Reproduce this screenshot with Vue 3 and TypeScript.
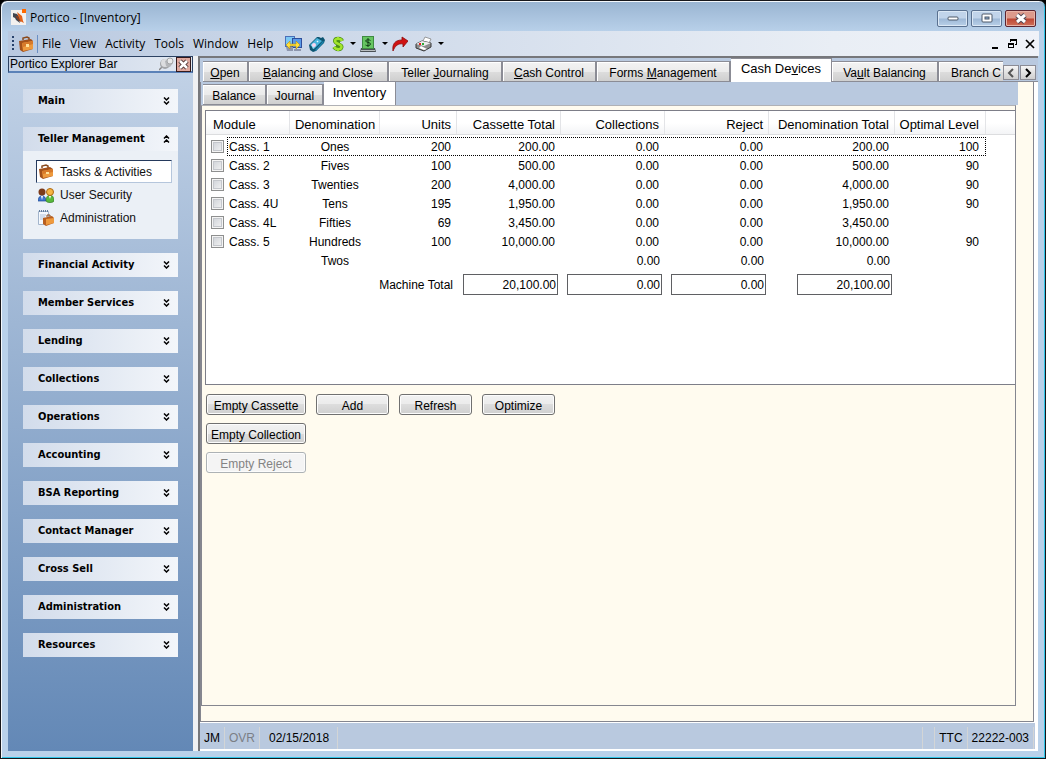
<script setup lang="ts">
import { ref } from 'vue'

interface Tab { pre: string; key: string; post: string }
interface Row { module: string; denom: string; units: string; cassette: string; total: string; optimal: string }

const menus: string[] = ['File', 'View', 'Activity', 'Tools', 'Window', 'Help']
const tabs: Tab[] = [
  { pre: '', key: 'O', post: 'pen' },
  { pre: '', key: 'B', post: 'alancing and Close' },
  { pre: 'Teller ', key: 'J', post: 'ournaling' },
  { pre: '', key: 'C', post: 'ash Control' },
  { pre: 'Forms ', key: 'M', post: 'anagement' },
  { pre: 'Cash De', key: 'v', post: 'ices' },
  { pre: 'Va', key: 'u', post: 'lt Balancing' },
  { pre: 'Branch C', key: '', post: '' }
]
const subTabs: string[] = ['Balance', 'Journal', 'Inventory']
const activeTab = ref(5)
const activeSub = ref(2)
const groups: string[] = [
  'Main', 'Teller Management', 'Financial Activity', 'Member Services', 'Lending', 'Collections',
  'Operations', 'Accounting', 'BSA Reporting', 'Contact Manager', 'Cross Sell', 'Administration', 'Resources'
]
const openGroup = ref('Teller Management')
const headers: string[] = ['Module', 'Denomination', 'Units', 'Cassette Total', 'Collections', 'Reject', 'Denomination Total', 'Optimal Level']
const rows: Row[] = [
  { module: 'Cass. 1', denom: 'Ones', units: '200', cassette: '200.00', total: '200.00', optimal: '100' },
  { module: 'Cass. 2', denom: 'Fives', units: '100', cassette: '500.00', total: '500.00', optimal: '90' },
  { module: 'Cass. 3', denom: 'Twenties', units: '200', cassette: '4,000.00', total: '4,000.00', optimal: '90' },
  { module: 'Cass. 4U', denom: 'Tens', units: '195', cassette: '1,950.00', total: '1,950.00', optimal: '90' },
  { module: 'Cass. 4L', denom: 'Fifties', units: '69', cassette: '3,450.00', total: '3,450.00', optimal: '' },
  { module: 'Cass. 5', denom: 'Hundreds', units: '100', cassette: '10,000.00', total: '10,000.00', optimal: '90' }
]
</script>

<template>
  <div class="window">
    <header class="titlebar">
      <svg class="logo" width="16" height="16" viewBox="0 0 16 16">
        <rect y="1" width="15" height="15" fill="#f3f1ef" />
        <path d="M2 4l4 1 4 5-2 1 1 3-4-3-1-2-2-1z" fill="#3f4650" />
        <path d="M6 3l5 4 1 5 1 2-4-2-1-3z" fill="#e2621b" />
        <path d="M6 6l4 7-2-1-3-4z" fill="#8b3c1b" />
        <rect x="11" width="4" height="4" fill="#ff6a00" />
      </svg>
      <h1>Portico - [Inventory]</h1>
      <div class="winbtns">
        <button aria-label="Minimize"><svg width="12" height="5"><rect x="1" y="1" width="10" height="3" rx="1" fill="#fff" stroke="#4d5868" /></svg></button>
        <button aria-label="Maximize"><svg width="12" height="10"><rect x="1" y="1" width="10" height="8" rx="1" fill="#fff" stroke="#4d5868" /><rect x="4" y="4" width="4" height="2" fill="#8fb0d5" stroke="#4d5868" /></svg></button>
        <button class="close" aria-label="Close"><svg width="14" height="11"><path d="M3 2l8 7M11 2l-8 7" stroke="#4d4652" stroke-width="5" /><path d="M3 2l8 7M11 2l-8 7" stroke="#fff" stroke-width="3" /></svg></button>
      </div>
    </header>

    <nav class="menubar" aria-label="Main menu">
      <span class="grip"></span>
      <svg class="case" width="16" height="16" viewBox="0 0 16 16">
        <path d="M5 4V2l4-1 2 1v2" fill="none" stroke="#8a4a1c" stroke-width="1.5" />
        <path d="M1 5l12-2 2 2v8l-10 3-3-2z" fill="#a4511a" />
        <path d="M4 7l11-2v8L5 15z" fill="#ee9a3e" />
        <path d="M4 7l11-2v3L5 11z" fill="#d7792a" />
        <path d="M8 8h3v3H8z" fill="#ffe19a" />
      </svg>
      <span class="sep"></span>
      <button v-for="m in menus" :key="m" class="menu">{{ m }}</button>
      <div class="tools">
        <button aria-label="Connect">
          <svg width="17" height="16" viewBox="0 0 17 16"><rect x=".5" y=".5" width="9" height="10" fill="#7cc8f4" stroke="#4a6fb8" /><rect x="7.500" y="2.500" width="9" height="9" fill="#5a9ae8" stroke="#2f4f9c" /><path d="M1 11h7v4H2zM9 13h7v2H9z" fill="#8d96ad" /><path d="M1 9l4-4v3h6V5l4 4-4 4v-3H5v3z" fill="#ffe03a" stroke="#b28a14" stroke-width=".6" /></svg>
        </button>
        <button aria-label="Device">
          <svg width="16" height="16" viewBox="0 0 16 16"><path d="M0 9L8 1l2 0 2 1 2-1 2 3-1 3-8 8-3 1-3-2z" fill="#0d5572" /><path d="M1 9l7-7 5 3-7 7z" fill="#49b5dc" /><path d="M6 14l8-9 1 1-8 9z" fill="#1c85ae" /><path d="M2 9l2 4 2-1-3-4z" fill="#8ce0f5" /><circle cx="5" cy="9" r="2" fill="#fbd5ee" /><path d="M8 5l1 1" stroke="#e5fbff" stroke-width="1.5" /></svg>
        </button>
        <button class="drop" aria-label="Cash">
          <svg width="12" height="16" viewBox="0 0 12 16"><path d="M10 5C9 2 3 2 3 5S10 8 9.500 11 4 14 2 11M6 1v14" fill="none" stroke="#4b8f16" stroke-width="4" /><path d="M10 5C9 2 3 2 3 5S10 8 9.500 11 4 14 2 11" fill="none" stroke="#a2e52c" stroke-width="2.500" /><path d="M6 1v3M6 12v3" stroke="#a2e52c" stroke-width="2" /></svg>
          <i></i>
        </button>
        <button class="drop" aria-label="Dispense">
          <svg width="16" height="16" viewBox="0 0 16 16"><path d="M1 12h14l1 4H0z" fill="#4b5156" /><path d="M1 14h14v1H1z" fill="#b9bfc2" /><rect x="2.500" y=".5" width="11" height="12" fill="#66c561" stroke="#3f8a42" /><path d="M10.500 4.500c-1-1-5-1-5 .5s5 1 5 3-4 2-5 1M8 2v9" fill="none" stroke="#123c16" /></svg>
          <i></i>
        </button>
        <button aria-label="Forward">
          <svg width="16" height="16" viewBox="0 0 16 16"><path d="M1 15C0 8 3 4 10 4V1l6 4-5 6V8C6 7 3 10 1 15z" fill="#d01212" stroke="#8e0909" stroke-width=".8" /></svg>
        </button>
        <button class="drop" aria-label="Print">
          <svg width="17" height="16" viewBox="0 0 17 16"><path d="M7 7l3-6 6 2-3 6z" fill="#fff" stroke="#777" stroke-width=".7" /><path d="M1 8l6-3 9 2v4l-7 4-8-3z" fill="#8c8c8c" stroke="#383838" /><path d="M1 8l6-3 9 2-7 3z" fill="#ececec" /><path d="M4 12l5 2 3-1-6-3z" fill="#fff" /><path d="M4 8h2" stroke="#e02020" stroke-width="2" /><path d="M7 8h2" stroke="#2faa35" stroke-width="2" /></svg>
          <i></i>
        </button>
      </div>
      <div class="mdi">
        <button aria-label="Minimize document"><svg width="10" height="10"><path d="M1 8h6v2H1z" /></svg></button>
        <button aria-label="Restore document"><svg width="10" height="10" shape-rendering="crispEdges"><path d="M2 0h7v6H7V5h1V2H3v1H2zM0 4h6v5H0zM1 6v2h4V6z" fill-rule="evenodd" /></svg></button>
        <button aria-label="Close document"><svg width="10" height="10"><path d="M1 1l8 8M9 1l-8 8" stroke="#000" stroke-width="1.700" /></svg></button>
      </div>
    </nav>

    <div class="body">
      <aside class="sidebar">
        <div class="barhead">
          <h2>Portico Explorer Bar</h2>
          <button class="pin" aria-label="Pin"><svg width="15" height="14" viewBox="0 0 15 14"><path d="M4 9l-4 4" stroke="#888" stroke-width="1.500" /><circle cx="6" cy="7" r="5" fill="#a3a5a8" /><circle cx="6" cy="6" r="4" fill="#dcdddf" /><path d="M6 4l4-2 4 4-3 4-4-1z" fill="#b5b7ba" /><circle cx="11" cy="4" r="3" fill="#e8e9ea" stroke="#a4a6a8" /></svg></button>
          <button class="shut" aria-label="Close bar"><svg width="11" height="11"><path d="M2 2l7 7M9 2l-7 7" stroke="#4d3333" stroke-width="4.500" /><path d="M2 2l7 7M9 2l-7 7" stroke="#fff" stroke-width="2.500" /></svg></button>
        </div>
        <div class="groups">
          <section v-for="g in groups" :key="g">
            <button class="ghead" @click="openGroup = g">
              {{ g }}
              <svg v-if="g === openGroup" width="7" height="8"><path d="M1 3.500l2.500-2.500L6 3.500M1 7.500l2.500-2.500L6 7.500" /></svg>
              <svg v-else width="7" height="8"><path d="M1 .5L3.500 3 6 .5M1 4.500L3.500 7 6 4.500" /></svg>
            </button>
            <div v-if="g === openGroup" class="links">
              <a href="#" class="on">
                <svg width="16" height="16" viewBox="0 0 16 16"><path d="M4 4V2l4-1 2 1v2" fill="none" stroke="#8a4a1c" stroke-width="1.500" /><path d="M1 5l11-2 3 2v7L5 15l-3-2z" fill="#a4511a" /><path d="M4 7l11-2v7L5 14z" fill="#ee9a3e" /><path d="M4 7l11-2v3L5 10z" fill="#d7792a" /><path d="M8 8h3v2H8z" fill="#ffe19a" /></svg>
                Tasks &amp; Activities
              </a>
              <a href="#">
                <svg width="16" height="16" viewBox="0 0 16 16"><path d="M0 14c0-7 8-7 8 0z" fill="#3b74d0" stroke="#204a94" stroke-width=".7" /><circle cx="4" cy="5" r="3.500" fill="#7b3a1a" /><path d="M8 14c0-8 8-8 8 0-1 2-7 2-8 0z" fill="#58b93c" stroke="#2f7424" stroke-width=".7" /><circle cx="12" cy="5" r="3.500" fill="#f5b544" stroke="#ad6815" /><path d="M3 9h2l-1 4zM11 9h2l-1 3z" fill="#fff" /></svg>
                User Security
              </a>
              <a href="#">
                <svg width="16" height="16" viewBox="0 0 16 16"><path d="M.5 1.500h10v13H.5z" fill="#f4f8fd" stroke="#a3b5cc" /><path d="M1 1h9" stroke="#637e9f" stroke-width="2" stroke-dasharray="1 1" /><path d="M2 5h6M2 7h5M2 9h3" stroke="#b1c3da" /><path d="M9 7V5h3v2" fill="none" stroke="#8a4a1c" /><path d="M5 8l9-2 2 2v5l-8 3-3-2z" fill="#b85f20" /><path d="M8 9l8-1v5l-8 2z" fill="#ee9a3e" /></svg>
                Administration
              </a>
            </div>
          </section>
        </div>
      </aside>

      <main class="main">
        <div class="tabs" role="tablist">
          <button v-for="(t, i) in tabs" :key="i" role="tab" :class="{ on: i === activeTab }" @click="activeTab = i">{{ t.pre }}<u>{{ t.key }}</u>{{ t.post }}</button>
          <div class="scrollers">
            <button aria-label="Scroll left"><svg width="8" height="10"><path d="M6 1L2 5l4 4" stroke="#555" /></svg></button>
            <button aria-label="Scroll right"><svg width="8" height="10"><path d="M2 1l4 4-4 4" stroke="#000" /></svg></button>
          </div>
        </div>
        <div class="page">
          <div class="subtabs" role="tablist">
            <button v-for="(s, i) in subTabs" :key="s" role="tab" :class="{ on: i === activeSub }" @click="activeSub = i">{{ s }}</button>
          </div>
          <div class="panel">
            <div class="grid">
              <table>
                <colgroup>
                  <col class="c-mod"><col class="c-den"><col class="c-units"><col class="c-amt"><col class="c-amt"><col class="c-amt"><col class="c-tot"><col class="c-opt">
                </colgroup>
                <thead>
                  <tr><th v-for="h in headers" :key="h">{{ h }}</th></tr>
                </thead>
                <tbody>
                  <tr v-for="(r, i) in rows" :key="r.module" :class="{ focus: i === 0 }">
                    <td><label><input type="checkbox">{{ r.module }}</label></td>
                    <td>{{ r.denom }}</td>
                    <td>{{ r.units }}</td>
                    <td>{{ r.cassette }}</td>
                    <td>0.00</td>
                    <td>0.00</td>
                    <td>{{ r.total }}</td>
                    <td>{{ r.optimal }}</td>
                  </tr>
                  <tr class="twos"><td></td><td>Twos</td><td></td><td></td><td>0.00</td><td>0.00</td><td>0.00</td><td></td></tr>
                </tbody>
                <tfoot>
                  <tr>
                    <td colspan="3"><label for="machine-total">Machine Total</label></td>
                    <td><input id="machine-total" value="20,100.00" readonly></td>
                    <td><input aria-label="Collections total" value="0.00" readonly></td>
                    <td><input aria-label="Reject total" value="0.00" readonly></td>
                    <td><input aria-label="Denomination total" value="20,100.00" readonly></td>
                    <td></td>
                  </tr>
                </tfoot>
              </table>
            </div>
            <div class="actions">
              <button>Empty Cassette</button>
              <button>Add</button>
              <button>Refresh</button>
              <button>Optimize</button>
              <button class="first">Empty Collection</button>
              <button class="first" disabled>Empty Reject</button>
            </div>
          </div>
        </div>
        <footer class="status">
          <span>JM</span><span class="dim">OVR</span><span class="date">02/15/2018</span>
          <span class="fill"></span><span class="blank"></span><span>TTC</span><span>22222-003</span>
        </footer>
      </main>
    </div>
  </div>
</template>

<style>
body { background: #000; }
</style>

<style scoped>
* { box-sizing: border-box; }
button { font: inherit; color: inherit; padding: 0; margin: 0; border: 0; background: none; white-space: nowrap; }
h1, h2 { margin: 0; font-weight: normal; }
svg { display: block; flex: none; }
.window {
  min-height: 100vh; display: flex; flex-direction: column; padding: 0 6px 6px;
  border: 1px solid #17171b; border-radius: 7px 7px 0 0;
  box-shadow: inset 1px 1px #f4f8fc, inset -1px -1px #30c5e8;
  background: linear-gradient(#99b4d1, #b9d1ea 31px, #b9d1ea);
  font: 12px/16px "Liberation Sans", Arial, sans-serif; color: #000;
}
.titlebar { height: 30px; display: flex; align-items: center; padding: 4px 2px 0 4px; font: 12px/16px "Open Sans", sans-serif; }
.titlebar h1 { font-size: 12px; margin-left: 3px; flex: 1; }
.logo { margin-bottom: 2px; }
.winbtns { display: flex; gap: 3px; margin-right: 1px; }
.winbtns button {
  width: 31px; height: 17px; display: flex; align-items: center; justify-content: center; border: 1px solid #5a7190;
  border-radius: 2px; box-shadow: inset 0 0 0 1px #dbe8f5; background: linear-gradient(#c1d4ea 48%, #9db8d6 52%, #b9d0e8);
}
.winbtns .close { border-color: #5b2430; box-shadow: inset 0 0 0 1px #e8b4a8; background: linear-gradient(#dc9a8c 48%, #bd4633 52%, #cf705a); }

.menubar {
  height: 25px; display: flex; align-items: center; font: 12px/16px "Open Sans", sans-serif; margin-left: 1px; padding: 0 4px 0 4px;
  background: linear-gradient(90deg, #b9c9e0, #cfdaea 35%, #e9eef5 80%, #eff2f8);
}
.grip { width: 2px; height: 15px; background: repeating-linear-gradient(#27416b 0 2px, transparent 2px 4px); }
.case { margin: 0 3px 0 4px; }
.sep { width: 1px; height: 18px; background: #6b8fc4; margin-right: 4px; }
.menu { margin-right: 9px; }
.tools { display: flex; align-items: center; gap: 7px; margin-left: 3px; }
.tools .drop { display: flex; align-items: center; gap: 6px; margin-right: -3px; }
.drop i { border: 3px solid transparent; border-top-color: #000; border-bottom: 0; }
.mdi { margin-left: auto; display: flex; gap: 7px; }

.body { flex: 1; display: flex; background: #f0f1f3; margin: 0 1px 1px; }
.sidebar { width: 185px; flex: none; background: linear-gradient(#c3d3e7, #6388b6); }
.barhead {
  height: 17px; display: flex; align-items: center; padding: 0 1px; border: 1px solid #2c4263; border-bottom: 2px solid #5b82b8;
  background: linear-gradient(90deg, #c4d2e6, #e3e9f2);
}
.barhead h2 { flex: 1; font-size: 12px; }
.pin { margin-right: 2px; }
.shut { width: 15px; height: 15px; display: grid; place-items: center; border: 1px solid #33191b; background: #e0a99f; }
.groups { display: flex; flex-direction: column; gap: 14px; padding: 15px 15px 0; margin-top: 1px; }
.ghead {
  width: 100%; height: 24px; display: flex; align-items: center; justify-content: space-between; padding: 0 8px 0 15px;
  background: linear-gradient(90deg, #d2dceb, #f3f6fa); font: bold 11px/16px "DejaVu Sans Condensed", "Noto Sans", sans-serif; text-align: left;
}
.ghead path { fill: none; stroke: #000; stroke-width: 1.5; }
.links { height: 88px; padding: 9px 6px 0 13px; background: #ebf0f6; }
.links a { height: 23px; display: flex; align-items: center; gap: 6px; padding-left: 1px; color: #111; text-decoration: none; border: 1px solid transparent; }
.links a.on { background: #fff; border-color: #24395c #b5c6dc #b5c6dc #24395c; }

.main { flex: 1; min-width: 0; margin-left: 5px; display: flex; flex-direction: column; border: solid #76777b; border-width: 2px 0 0 2px; background: #fff; padding: 0 4px 2px 0; }
.tabs {
  display: grid; grid-template-columns: 46px 140px 114px 94px 134px 101px 107px 64px auto; align-items: end; padding-left: 3px;
  height: 24px; margin-right: -4px; background: #b9c9df;
}
.tabs > button, .subtabs > button {
  height: 21px; padding-top: 3px; border: 1px solid #8b8c95; border-width: 1px 2px 1px 0; box-shadow: inset 1px 1px #fff;
  background: linear-gradient(#f3f3f3, #ebebeb 50%, #dcdcdc 55%, #cfcfcf);
}
.tabs > button:nth-child(8) { text-align: left; padding-left: 12px; border-right: 0; }
.tabs > button.on { height: 24px; padding-top: 0; padding-bottom: 3px; background: #fff; border-bottom: 0; border-right-width: 1px; font-size: 13px; }
.scrollers { height: 21px; padding-top: 4px; display: flex; gap: 1px; border-bottom: 1px solid #8b8c95; }
.scrollers button { width: 16px; height: 15px; display: grid; place-items: center; border: 1px solid #8b8c95; background: linear-gradient(#f5f5f5, #cfcfcf); }
.scrollers path { fill: none; stroke-width: 2; }
.page { flex: 1; display: flex; flex-direction: column; background: #fffbef; border: 1px solid #85868f; border-top: 0; padding-right: 15px; }
.subtabs { height: 23px; display: grid; grid-template-columns: 64px 57px 72px; align-items: end; padding-left: 2px; background: #b9c9df; }
.subtabs > button.on { height: 23px; padding: 0 0 2px; background: #fff; border-bottom: 0; border-top: 0; border-right-width: 1px; font-size: 13px; }
.panel { flex: 1; border: 1px solid #85868f; margin: 0 2px 15px 0; border-top-color: #b0b1b5; padding: 4px 0 0 3px; }
.grid { height: 275px; border: 1px solid #7d7e88; border-right: 0; background: linear-gradient(#fff, #fff 12px, #f3f4f6 23px, #dcdddf 23px, #dcdddf 24px, #fff 24px); }
table { width: 780px; table-layout: fixed; border-collapse: separate; border-spacing: 0; }
.c-mod { width: 84px; } .c-den { width: 90px; } .c-units { width: 77px; } .c-amt { width: 104px; } .c-tot { width: 126px; } .c-opt { width: 91px; }
th, td { padding: 0 6px 0 0; text-align: right; white-space: nowrap; }
th { height: 26px; padding-top: 2px; font-weight: normal; font-size: 13px; background: linear-gradient(#e3e4e7, #e3e4e7) right top / 1px 23px no-repeat; }
th:first-child { text-align: left; padding-left: 7px; }
th:nth-child(2), td:nth-child(2) { text-align: center; padding: 0; }
th:nth-child(2) { padding-top: 2px; }
th:last-child, td:last-child { padding-right: 7px; }
tbody td { height: 19px; padding-top: 1px; }
tbody td:nth-child(2) { padding-top: 1px; }
tbody td:first-child { text-align: left; padding: 0 0 0 5px; }
tbody tr { position: relative; }
tr.focus::after { content: ""; position: absolute; left: 21px; right: 0; top: 0; bottom: 0; border: 1px dotted #000; }
td label { display: flex; align-items: center; gap: 5px; }
input[type="checkbox"] { appearance: none; width: 13px; height: 13px; margin: 0; border: 1px solid #8e8f8f; box-shadow: inset 0 0 0 1px #f4f4f4, inset 0 0 0 2px #c4c7cc; background: linear-gradient(135deg, #cbcfd5, #f6f6f6); }
.twos td { height: 18px; }
tbody .twos td:nth-child(n+5) { padding-right: 5px; }
tfoot td { height: 31px; padding: 0 3px 0 0; }
tfoot td:first-child { padding-right: 4px; }
tfoot td:nth-child(2) { text-align: right; padding-right: 3px; }
tfoot label { display: block; }
tfoot input { display: block; width: 95px; height: 21px; margin-left: auto; padding: 0 1px; border: 1px solid #5f6063; background: #fff; font: inherit; text-align: right; outline: 0; }
.actions { display: grid; grid-template-columns: 100px 73px 73px 73px; gap: 8px 10px; padding: 9px 1px; }
.actions button { height: 21px; padding-top: 2px; border: 1px solid #707070; border-radius: 3px; box-shadow: inset 0 0 0 1px #fcfcfc; background: linear-gradient(#f2f2f2, #ebebeb 50%, #dddddd 50%, #cfcfcf); }
.actions .first { grid-column: 1; }
.actions button:disabled { border-color: #adb2b5; background: #f4f4f4; color: #838383; }
.status { height: 26px; margin: 1px -1px 0 0; padding: 4px 1px 0 0; display: flex; background: #b9c9df; line-height: 22px; }
.status span { padding: 0 4px; border-right: 1px solid #d3d5d6; }
.status .dim { color: #7b7f86; }
.status .date { padding: 0 8px 0 9px; }
.status .fill { flex: 1; }
.status .blank { width: 12px; }
</style>
